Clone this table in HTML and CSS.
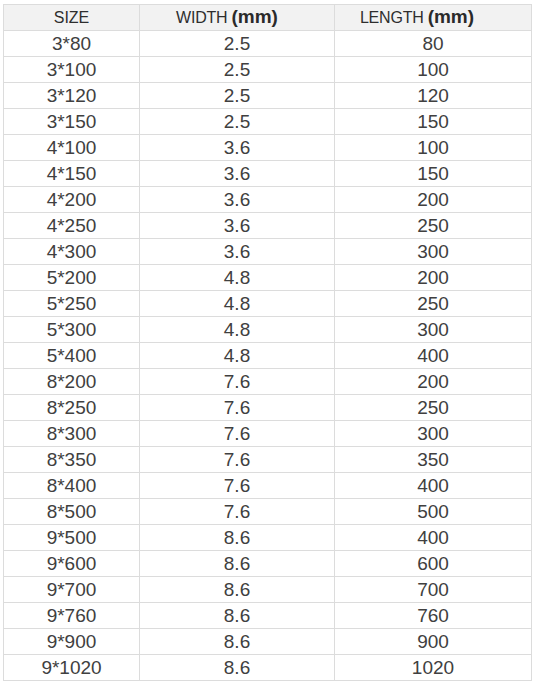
FILE: index.html
```html
<!DOCTYPE html>
<html>
<head>
<meta charset="utf-8">
<link rel="stylesheet" href="styles.css">
</head>
<body>
<table class="spec">
<colgroup><col class="c1"><col class="c2"><col class="c3"></colgroup>
<thead>
<tr><th>SIZE</th><th class="h2"><span class="lbl">WIDTH</span><b class="unit">(mm)</b></th><th class="h3"><span class="lbl">LENGTH</span><b class="unit">(mm)</b></th></tr>
</thead>
<tbody>
<tr><td>3*80</td><td>2.5</td><td>80</td></tr>
<tr><td>3*100</td><td>2.5</td><td>100</td></tr>
<tr><td>3*120</td><td>2.5</td><td>120</td></tr>
<tr><td>3*150</td><td>2.5</td><td>150</td></tr>
<tr><td>4*100</td><td>3.6</td><td>100</td></tr>
<tr><td>4*150</td><td>3.6</td><td>150</td></tr>
<tr><td>4*200</td><td>3.6</td><td>200</td></tr>
<tr><td>4*250</td><td>3.6</td><td>250</td></tr>
<tr><td>4*300</td><td>3.6</td><td>300</td></tr>
<tr><td>5*200</td><td>4.8</td><td>200</td></tr>
<tr><td>5*250</td><td>4.8</td><td>250</td></tr>
<tr><td>5*300</td><td>4.8</td><td>300</td></tr>
<tr><td>5*400</td><td>4.8</td><td>400</td></tr>
<tr><td>8*200</td><td>7.6</td><td>200</td></tr>
<tr><td>8*250</td><td>7.6</td><td>250</td></tr>
<tr><td>8*300</td><td>7.6</td><td>300</td></tr>
<tr><td>8*350</td><td>7.6</td><td>350</td></tr>
<tr><td>8*400</td><td>7.6</td><td>400</td></tr>
<tr><td>8*500</td><td>7.6</td><td>500</td></tr>
<tr><td>9*500</td><td>8.6</td><td>400</td></tr>
<tr><td>9*600</td><td>8.6</td><td>600</td></tr>
<tr><td>9*700</td><td>8.6</td><td>700</td></tr>
<tr><td>9*760</td><td>8.6</td><td>760</td></tr>
<tr><td>9*900</td><td>8.6</td><td>900</td></tr>
<tr><td>9*1020</td><td>8.6</td><td>1020</td></tr>
</tbody>
</table>
</body>
</html>
```
FILE: styles.css
```css
html, body {
  margin: 0;
  padding: 0;
  background: #ffffff;
}
body {
  padding: 4px 0 0 3px;
  font-family: "Liberation Sans", Arial, sans-serif;
  color: #404040;
}
.spec {
  border-collapse: collapse;
  table-layout: fixed;
  width: 528px;
}
.c1 { width: 136px; }
.c2 { width: 195px; }
.c3 { width: 197px; }
.spec th, .spec td {
  border: 1px solid #dcdcdc;
  height: 26px;
  padding: 0;
  box-sizing: border-box;
  text-align: center;
  vertical-align: middle;
  font-size: 19px;
  line-height: 22px;
  white-space: nowrap;
}
.spec th {
  background: #f2f2f2;
  font-weight: normal;
  font-size: 16px;
  color: #2e2e2e;
}
.spec .h2 {
  padding-right: 20px;
}
.spec .h3 {
  padding-right: 32px;
}
.lbl {
  font-size: 16px;
  letter-spacing: -0.2px;
}
.unit {
  font-size: 19px;
  font-weight: bold;
  margin-left: 4px;
  color: #2a2a2a;
}
```
